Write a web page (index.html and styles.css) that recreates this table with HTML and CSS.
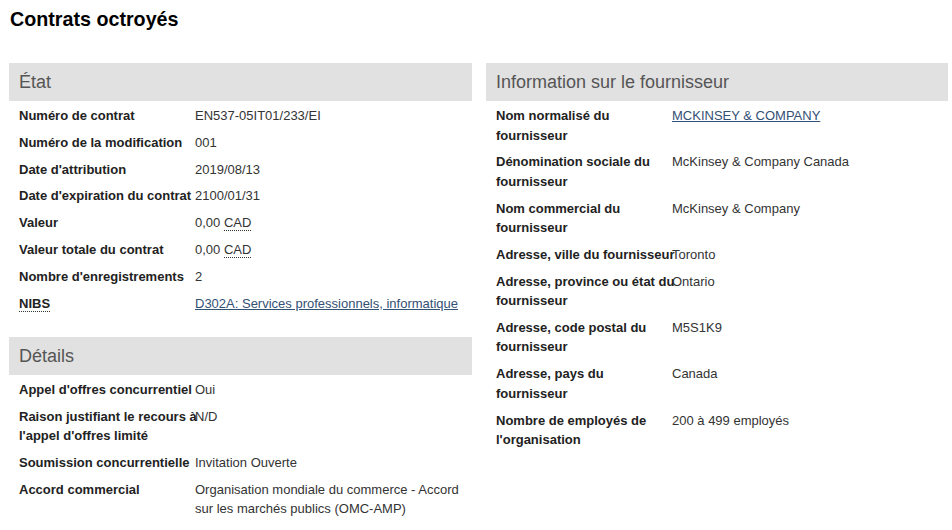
FILE: index.html
```html
<!DOCTYPE html>
<html lang="fr">
  <head>
    <meta charset="UTF-8" />
    <meta name="viewport" content="width=device-width, initial-scale=1.0" />
    <title>Contrats octroyés</title>
    <link rel="stylesheet" href="styles.css">
  </head>
  <body>
    <h1 class="page-title">Contrats octroyés</h1>
    <div class="columns">
      <div class="column">
        <section class="panel">
          <h2 class="panel-title">État</h2>
          <dl class="fields">
            <dt>Numéro de contrat</dt>
            <dd>EN537-05IT01/233/EI</dd>
            <dt>Numéro de la modification</dt>
            <dd>001</dd>
            <dt>Date d'attribution</dt>
            <dd>2019/08/13</dd>
            <dt>Date d'expiration du contrat</dt>
            <dd>2100/01/31</dd>
            <dt>Valeur</dt>
            <dd>0,00 <abbr title="Dollars canadiens">CAD</abbr></dd>
            <dt>Valeur totale du contrat</dt>
            <dd>0,00 <abbr title="Dollars canadiens">CAD</abbr></dd>
            <dt>Nombre d'enregistrements</dt>
            <dd>2</dd>
            <dt><abbr title="Numéro d'identification des biens et services">NIBS</abbr></dt>
            <dd><a href="#">D302A: Services professionnels, informatique</a></dd>
          </dl>
        </section>
        <section class="panel">
          <h2 class="panel-title">Détails</h2>
          <dl class="fields">
            <dt>Appel d'offres concurrentiel</dt>
            <dd>Oui</dd>
            <dt>Raison justifiant le recours à l'appel d'offres limité</dt>
            <dd>N/D</dd>
            <dt>Soumission concurrentielle</dt>
            <dd>Invitation Ouverte</dd>
            <dt>Accord commercial</dt>
            <dd>Organisation mondiale du commerce - Accord sur les marchés publics (OMC-AMP)</dd>
          </dl>
        </section>
      </div>
      <div class="column">
        <section class="panel">
          <h2 class="panel-title">Information sur le fournisseur</h2>
          <dl class="fields">
            <dt>Nom normalisé du fournisseur</dt>
            <dd><a href="#">MCKINSEY &amp; COMPANY</a></dd>
            <dt>Dénomination sociale du fournisseur</dt>
            <dd>McKinsey &amp; Company Canada</dd>
            <dt>Nom commercial du fournisseur</dt>
            <dd>McKinsey &amp; Company</dd>
            <dt>Adresse, ville du fournisseur</dt>
            <dd>Toronto</dd>
            <dt>Adresse, province ou état du fournisseur</dt>
            <dd>Ontario</dd>
            <dt>Adresse, code postal du fournisseur</dt>
            <dd>M5S1K9</dd>
            <dt>Adresse, pays du fournisseur</dt>
            <dd>Canada</dd>
            <dt>Nombre de employés de l'organisation</dt>
            <dd>200 à 499 employés</dd>
          </dl>
        </section>
      </div>
    </div>
  </body>
</html>
```

FILE: styles.css
```css
body {
  margin: 0;
  padding: 0 4px 0 9px;
  font-family: "Liberation Sans", Arial, sans-serif;
  font-size: 13px;
  line-height: 1.5;
  color: #333;
  background: #fff;
}

.page-title {
  margin: 8px 0 0 1px;
  font-size: 19.7px;
  line-height: 23px;
  font-weight: 700;
  color: #000;
}

.columns {
  display: grid;
  grid-template-columns: 463px 462px;
  gap: 14px;
  margin-top: 32px;
}

.panel {
  margin-bottom: 24px;
}

.panel-title {
  margin: 0;
  padding: 6px 10px;
  font-size: 18px;
  line-height: 26px;
  font-weight: 400;
  color: #555;
  background-color: #e1e1e1;
}

.fields {
  display: grid;
  grid-template-columns: 176px 1fr;
  row-gap: 7.3px;
  margin: 5px 0 0;
  padding: 0 10px;
}

/* labels run up to the value like the original table does */
.fields dt {
  font-weight: 700;
  color: #222;
  margin-right: -4.5px;
}

.fields dd {
  margin: 0;
}

.fields a {
  color: #335075;
  text-decoration: underline;
}

abbr {
  text-decoration: none;
  border-bottom: 1px dotted #333;
}
```
